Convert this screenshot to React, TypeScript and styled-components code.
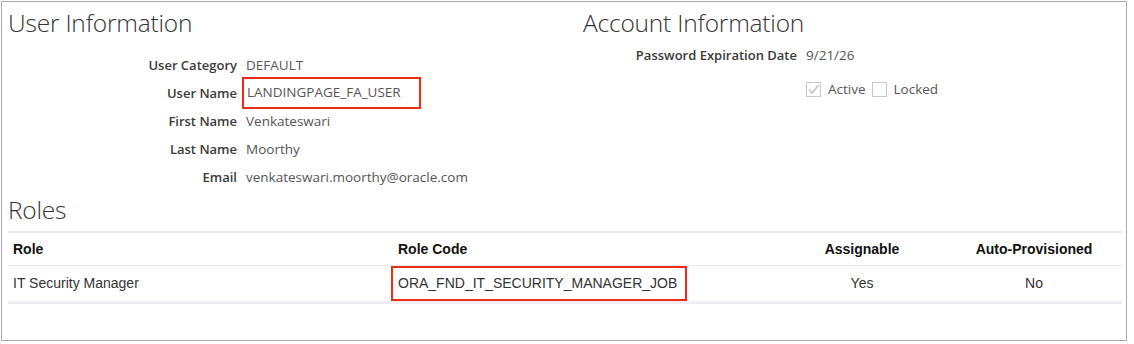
import styled, { createGlobalStyle } from 'styled-components';

const GlobalStyle = createGlobalStyle`
  body {
    margin: 0;
    background: #fff;
  }
  * {
    box-sizing: border-box;
  }
`;

const userFields = [
  { label: 'User Category', value: 'DEFAULT' },
  { label: 'User Name', value: 'LANDINGPAGE_FA_USER', marked: true },
  { label: 'First Name', value: 'Venkateswari' },
  { label: 'Last Name', value: 'Moorthy' },
  { label: 'Email', value: 'venkateswari.moorthy@oracle.com' },
];

const roles = [
  {
    role: 'IT Security Manager',
    code: 'ORA_FND_IT_SECURITY_MANAGER_JOB',
    assignable: 'Yes',
    auto: 'No',
  },
];

const Panel = styled.div`
  margin: 1px 0 0 1px;
  width: 1126px;
  height: 340px;
  border: 1px solid #a9a9a9;
  padding: 0 4px 0 6px;
  font-family: 'Segoe UI', 'Open Sans', 'Noto Sans', sans-serif;
`;

const TopRow = styled.div`
  display: grid;
  grid-template-columns: 575px 1fr;
`;

const Heading = styled.h2`
  margin: 0;
  padding-top: 5px;
  font-size: 24.5px;
  font-weight: 300;
  line-height: 32px;
  height: 36px;
  color: #333;
  letter-spacing: -0.2px;
`;

const Form = styled.div<{ labelWidth: number; rowHeight: number; offset: number }>`
  display: grid;
  grid-template-columns: ${(p) => p.labelWidth}px auto;
  grid-auto-rows: ${(p) => p.rowHeight}px;
  column-gap: 9px;
  padding-top: ${(p) => p.offset}px;
  align-items: center;
  justify-content: start;
`;

const Label = styled.div`
  text-align: right;
  font-size: 13px;
  font-weight: 600;
  color: #3a3a3a;
  white-space: nowrap;
`;

const Value = styled.div<{ marked?: boolean }>`
  justify-self: start;
  font-size: 13.5px;
  color: #555;
  white-space: nowrap;
  padding: ${(p) => (p.marked ? '4px 18px 6px 3px' : '0')};
  margin-left: ${(p) => (p.marked ? '-4px' : '0')};
  border: ${(p) => (p.marked ? '2px solid #ec2c14' : 'none')};
`;

const CheckRow = styled.div`
  display: flex;
  align-items: center;
  gap: 6px;
  font-size: 13.5px;
  color: #555;
`;

const Box = styled.span`
  width: 15px;
  height: 15px;
  border: 1px solid #c9c9c9;
  background: #fff;
  display: inline-flex;
  align-items: center;
  justify-content: center;
`;

const CheckItem = styled.span`
  display: inline-flex;
  align-items: center;
  gap: 7px;
`;

const RolesHeading = styled(Heading)`
  padding-top: 3px;
  height: 40px;
`;

const Table = styled.table`
  width: 1114px;
  border-collapse: collapse;
  font-family: 'Liberation Sans', Arial, sans-serif;
  font-size: 14px;
  color: #333;
  border-top: 2px solid #e6e9ee;
`;

const Th = styled.th<{ align?: string; w?: number }>`
  text-align: ${(p) => p.align || 'left'};
  width: ${(p) => (p.w ? `${p.w}px` : 'auto')};
  font-weight: bold;
  color: #111;
  height: 33px;
  padding: 0 5px;
  border-bottom: 1px solid #e6e9ee;
`;

const Td = styled.td<{ align?: string }>`
  text-align: ${(p) => p.align || 'left'};
  height: 36px;
  padding: 0 5px;
  color: #333;
  border-bottom: 3px solid #eceef2;
`;

const CodeMark = styled.span`
  display: inline-block;
  margin-left: -7px;
  padding: 7px 8px 8px 5px;
  border: 2px solid #ec2c14;
`;

const Checkmark = () => (
  <svg width="13" height="13" viewBox="0 0 13 13">
    <path d="M2 6.5 L5 10 L11.5 2" fill="none" stroke="#c8c8c8" strokeWidth="1.8" />
  </svg>
);

const App = () => {
  return (
    <>
      <GlobalStyle />
      <Panel>
        <TopRow>
          <div>
            <Heading>User Information</Heading>
            <Form labelWidth={229} rowHeight={28} offset={13}>
              {userFields.map((f) => (
                <>
                  <Label key={f.label}>{f.label}</Label>
                  <Value key={f.value} marked={f.marked}>
                    {f.value}
                  </Value>
                </>
              ))}
            </Form>
          </div>
          <div>
            <Heading>Account Information</Heading>
            <Form labelWidth={214} rowHeight={34} offset={0}>
              <Label>Password Expiration Date</Label>
              <Value>9/21/26</Value>
              <span />
              <CheckRow>
                <CheckItem>
                  <Box>
                    <Checkmark />
                  </Box>
                  Active
                </CheckItem>
                <CheckItem>
                  <Box />
                  Locked
                </CheckItem>
              </CheckRow>
            </Form>
          </div>
        </TopRow>
        <RolesHeading>Roles</RolesHeading>
        <Table>
          <thead>
            <tr>
              <Th w={385}>Role</Th>
              <Th w={385}>Role Code</Th>
              <Th align="center" w={168}>
                Assignable
              </Th>
              <Th align="center">Auto-Provisioned</Th>
            </tr>
          </thead>
          <tbody>
            {roles.map((r) => (
              <tr key={r.code}>
                <Td>{r.role}</Td>
                <Td>
                  <CodeMark>{r.code}</CodeMark>
                </Td>
                <Td align="center">{r.assignable}</Td>
                <Td align="center">{r.auto}</Td>
              </tr>
            ))}
          </tbody>
        </Table>
      </Panel>
    </>
  );
};

export default App;
